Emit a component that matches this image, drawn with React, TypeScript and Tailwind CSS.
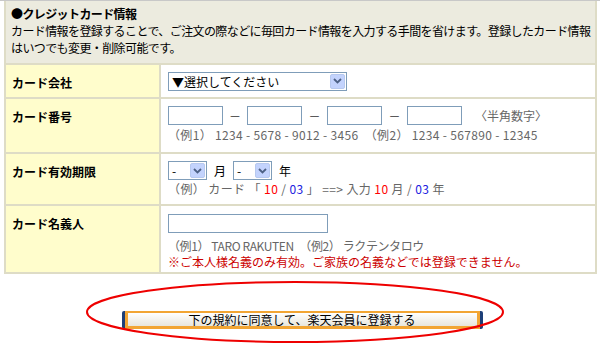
import React from "react";

const font = { fontFamily: '"Noto Sans CJK JP", "Liberation Sans", sans-serif' };

const FakeSelect = ({ label, w }: { label: string; w: string }) => {
  return (
    <span className={`inline-flex h-[19px] items-stretch border border-[#7f9db9] bg-white ${w}`}>
      <span className="flex-1 pl-[3px] text-[12px] leading-[17px] text-black">{label}</span>
      <span className="m-[1px] flex w-[15px] items-center justify-center rounded-[2px] border border-[#b7c9ef] bg-[#c3d3fd]">
        <svg width="9" height="6" viewBox="0 0 9 6">
          <path d="M1 1 L4.5 4.5 L8 1" fill="none" stroke="#4d6185" strokeWidth="1.8" />
        </svg>
      </span>
    </span>
  );
};

const TextBox = ({ w }: { w: string }) => (
  <span className={`inline-block h-[19px] border border-[#7f9db9] bg-white ${w}`} />
);

const rows = [
  { label: "カード会社", h: "h-[34px]" },
  { label: "カード番号", h: "h-[55px]" },
  { label: "カード有効期限", h: "h-[52px]" },
  { label: "カード名義人", h: "h-[68px]" },
];

export default function App() {
  return (
    <div style={font} className="relative h-[353px] w-[600px] overflow-hidden bg-white text-[12px] text-[#333]">
      <div className="h-[1px] w-full bg-[#c8c8c8]" />
      <div className="ml-[4px] w-[593px] border-2 border-t-0 border-[#dedcc6]">
        {/* header */}
        <div className="h-[62px] bg-[#ecebdf] pl-[5px] pt-[4px] leading-[17px] tracking-[-0.6px] text-black">
          <div className="font-bold">●クレジットカード情報</div>
          <div>
            カード情報を登録することで、ご注文の際などに毎回カード情報を入力する手間を省けます。登録したカード情報
            <br />
            はいつでも変更・削除可能です。
          </div>
        </div>

        {/* card company */}
        <div className="grid grid-cols-[155px_1fr] border-t-2 border-[#dedcc6]">
          <div className="h-[32px] border-r-2 border-[#dedcc6] bg-[#fffdcc] pl-[6px] pt-[9px] font-bold text-black">
            {rows[0].label}
          </div>
          <div className="flex items-center pl-[7px]">
            <FakeSelect label="▼選択してください" w="w-[179px]" />
          </div>
        </div>

        {/* card number */}
        <div className="grid grid-cols-[155px_1fr] border-t-2 border-[#dedcc6]">
          <div className="h-[53px] border-r-2 border-[#dedcc6] bg-[#fffdcc] pl-[6px] pt-[9px] font-bold text-black">
            {rows[1].label}
          </div>
          <div className="pl-[7px] pt-[7px]">
            <div className="flex items-center">
              <TextBox w="w-[55px]" />
              <span className="w-[24px] text-center text-[#333]">－</span>
              <TextBox w="w-[55px]" />
              <span className="w-[25px] text-center text-[#333]">－</span>
              <TextBox w="w-[55px]" />
              <span className="w-[25px] text-center text-[#333]">－</span>
              <TextBox w="w-[55px]" />
              <span className="ml-[13px] text-[12px] text-[#666]">〈半角数字〉</span>
            </div>
            <div className="mt-[3px] whitespace-nowrap text-[12px] leading-[14px] tracking-[0.33px] text-[#666]">
              （例1） 1234 - 5678 - 9012 - 3456　（例2） 1234 - 567890 - 12345
            </div>
          </div>
        </div>

        {/* expiry */}
        <div className="grid grid-cols-[155px_1fr] border-t-2 border-[#dedcc6]">
          <div className="h-[50px] border-r-2 border-[#dedcc6] bg-[#fffdcc] pl-[6px] pt-[9px] font-bold text-black">
            {rows[2].label}
          </div>
          <div className="pl-[7px] pt-[7px]">
            <div className="flex items-center gap-[7px] text-black">
              <FakeSelect label="-" w="w-[39px]" />
              <span>月</span>
              <FakeSelect label="-" w="w-[39px]" />
              <span>年</span>
            </div>
            <div className="mt-[2px] whitespace-nowrap text-[12px] leading-[14px] tracking-[0.4px] text-[#666]">
              （例） カード 「 <span className="text-[#ff0000]">10</span> / <span className="text-[#2020e0]">03</span> 」 ==&gt; 入力 <span className="text-[#ff0000]">10</span> 月 / <span className="text-[#2020e0]">03</span> 年
            </div>
          </div>
        </div>

        {/* holder */}
        <div className="grid grid-cols-[155px_1fr] border-t-2 border-[#dedcc6]">
          <div className="h-[66px] border-r-2 border-[#dedcc6] bg-[#fffdcc] pl-[6px] pt-[9px] font-bold text-black">
            {rows[3].label}
          </div>
          <div className="pl-[7px] pt-[8px]">
            <TextBox w="w-[160px]" />
            <div className="mt-[1px] whitespace-nowrap text-[12px] leading-[15px] tracking-[-0.4px] text-[#666]">
              （例1） TARO RAKUTEN　（例2） ラクテンタロウ
            </div>
            <div className="mt-[1px] whitespace-nowrap text-[12px] leading-[16px] text-[#cc0000]">
              ※ご本人様名義のみ有効。ご家族の名義などでは登録できません。
            </div>
          </div>
        </div>
      </div>

      {/* submit */}
      <div className="mt-[37px] flex justify-center pl-[4px]">
        <button className="flex h-[18px] w-[361px] items-stretch rounded-[2px] bg-[#1d3f78] p-0">
          <span className="mx-[3px] flex flex-1 items-center justify-center border-b-[3px] border-x-[3px] border-t-[2px] border-[#f2a533] bg-gradient-to-b from-[#ffffff] to-[#e8e6dc] text-[12px] leading-none text-black">
            下の規約に同意して、楽天会員に登録する
          </span>
        </button>
      </div>

      {/* red annotation ellipse */}
      <svg className="pointer-events-none absolute left-0 top-0" width="600" height="353">
        <ellipse cx="295" cy="312" rx="208" ry="30" fill="none" stroke="#ee0000" strokeWidth="2" />
      </svg>
    </div>
  );
}
